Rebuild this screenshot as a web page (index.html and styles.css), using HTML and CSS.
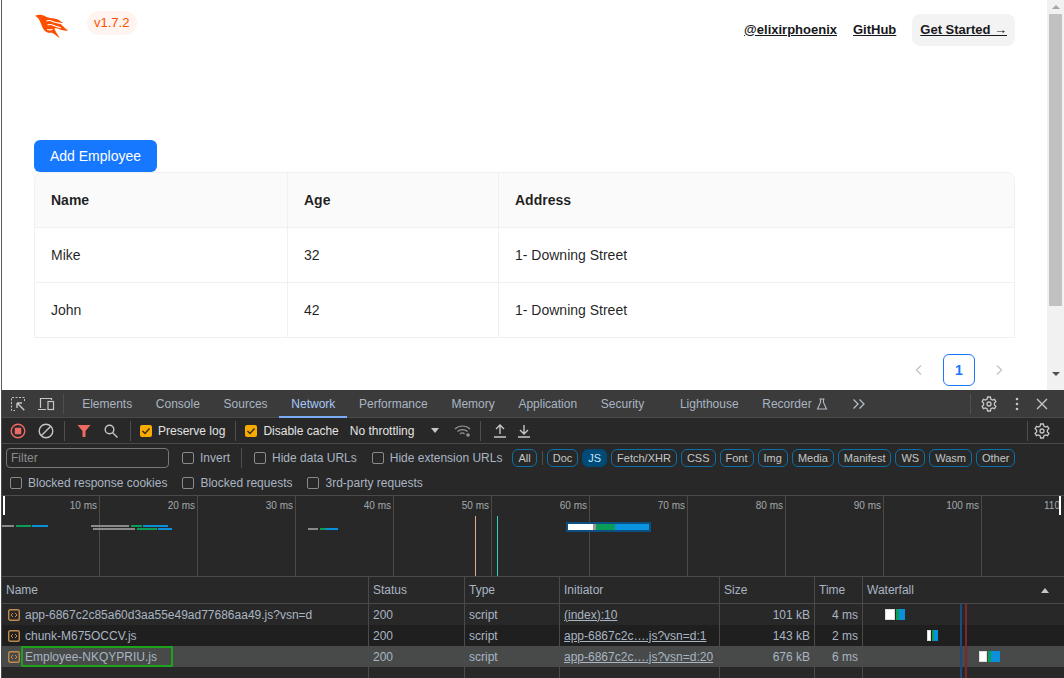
FILE: index.html
```html
<!DOCTYPE html>
<html lang="en">
<head>
<meta charset="utf-8">
<title>Employees</title>
<link rel="stylesheet" href="styles.css">
</head>
<body>
<div class="app">
  <section class="page">
    <main class="main">
      <header class="topbar">
        <div class="brand">
          <svg class="logo" viewBox="0 0 34 25" width="34" height="25">
            <path fill="#fd4f00" d="M0 1.800C1.700 1 3.500.5 5.500.7c3 .3 5 1.800 7 2.600 3.500 1.300 6 .6 9 1.800 2.500 1 4.500 2.500 6.500 4-1.500 0-3-.4-4-.2 3 1.600 5.500 5 9.300 7.800-4 .6-8-1.400-11-2.200-1-.3-2-.3-3 .2 1.500 3 3.200 6 5.500 9.200-3-1.500-5.500-4.300-8-5.200-3.500.6-6.500-.8-8.500-3.800C6.500 12 6 9 4.500 6.500 3.800 5 3 3.500 0 1.800Z"/>
            <path fill="none" stroke="#fff" stroke-width="1.100" d="M11.500 7c3-1.500 6 .5 8.500 1.300 2 .6 3.500.5 5 1M12.500 11c3-1.700 6 .6 9 1.600 1.500.5 3 .8 4.500 1.200M12 15.500c2 .5 4 .5 5.500-.3"/>
          </svg>
          <span class="version">v1.7.2</span>
        </div>
        <nav class="nav">
          <a class="nav-link" href="#">@elixirphoenix</a>
          <a class="nav-link" href="#">GitHub</a>
          <a class="nav-link nav-cta" href="#"><span>Get Started <span class="arrow">→</span></span></a>
        </nav>
      </header>
      <button class="add-btn" type="button">Add Employee</button>
      <div class="emp-table">
        <div class="emp-row emp-head"><div class="emp-cell">Name</div><div class="emp-cell">Age</div><div class="emp-cell">Address</div></div>
        <div class="emp-row"><div class="emp-cell">Mike</div><div class="emp-cell">32</div><div class="emp-cell">1- Downing Street</div></div>
        <div class="emp-row"><div class="emp-cell">John</div><div class="emp-cell">42</div><div class="emp-cell">1- Downing Street</div></div>
      </div>
      <div class="pager">
        <span class="pg-arrow"><svg viewBox="0 0 12 12" width="12" height="12"><path d="M8 1.500 3.500 6 8 10.500" fill="none" stroke="#c4c4c4" stroke-width="1.300"/></svg></span>
        <span class="pg-current">1</span>
        <span class="pg-arrow"><svg viewBox="0 0 12 12" width="12" height="12"><path d="M4 1.500 8.500 6 4 10.500" fill="none" stroke="#c4c4c4" stroke-width="1.300"/></svg></span>
      </div>
    </main>
    <aside class="pagebar">
      <div class="sb-up"></div>
      <div class="sb-thumb"></div>
      <div class="sb-down"></div>
    </aside>
  </section>

  <section class="devtools">
    <div class="tabs">
      <span class="tb-ico t-first"><svg viewBox="0 0 16 16" width="16" height="16" fill="none" stroke="#c4c7c5"><path d="M14.500 5V1.500H1.500V14.500H5" stroke-dasharray="2 1.500"/><path d="M7 7h5M7 7v5M7.300 7.300l7 7" stroke-width="1.400"/></svg></span>
      <span class="tb-ico t-device"><svg viewBox="0 0 18 16" width="18" height="16" fill="none" stroke="#c4c7c5" stroke-width="1.200"><path d="M3.500 12V2.500h11V4M1 13.500h8"/><rect x="11" y="5.500" width="5.500" height="8"/></svg></span>
      <span class="sep sep-tab"></span>
      <a class="tab">Elements</a><a class="tab">Console</a><a class="tab">Sources</a><a class="tab tab-on">Network</a><a class="tab">Performance</a><a class="tab">Memory</a><a class="tab">Application</a><a class="tab">Security</a><a class="tab tab-gap">Lighthouse</a><a class="tab">Recorder<svg class="flask" viewBox="0 0 12 12" width="12" height="12" fill="none" stroke="#b4bcc4" stroke-width="1.100"><path d="M3.500 1h5M4.500 1v3.500L1.500 11h9L7.500 4.500V1"/></svg></a>
      <span class="more"><svg viewBox="0 0 14 12" width="14" height="12" fill="none" stroke="#b4bcc4" stroke-width="1.300"><path d="M1.500 1.500 6 6l-4.500 4.500M7.500 1.500 12 6l-4.500 4.500"/></svg></span>
      <span class="tabs-right">
        <span class="sep"></span>
        <svg class="ic-gear" viewBox="0 0 16 16" width="16" height="16" fill="none" stroke="#c4c7c5" stroke-width="1.300"><path d="M6.600 1h2.800l.4 2 1.700 1 2-.7 1.400 2.400-1.500 1.400v1.800l1.500 1.400-1.400 2.400-2-.7-1.700 1-.4 2H6.600l-.4-2-1.700-1-2 .7L1.100 10.300l1.500-1.400V7.100L1.100 5.700l1.400-2.400 2 .7 1.700-1Z"/><circle cx="8" cy="8" r="2"/></svg>
        <svg class="ic-dots" viewBox="0 0 4 14" width="4" height="14" fill="#c4c7c5"><circle cx="2" cy="2" r="1.300"/><circle cx="2" cy="7" r="1.300"/><circle cx="2" cy="12" r="1.300"/></svg>
        <svg class="ic-close" viewBox="0 0 12 12" width="12" height="12" fill="none" stroke="#c4c7c5" stroke-width="1.400"><path d="M1 1l10 10M11 1 1 11"/></svg>
      </span>
    </div>

    <div class="toolbar">
      <svg class="ic-rec" viewBox="0 0 16 16" width="16" height="16"><circle cx="8" cy="8" r="6.800" fill="none" stroke="#ee6a62" stroke-width="1.400"/><rect x="4.800" y="4.800" width="6.400" height="6.400" rx=".8" fill="#ee6a62"/></svg>
      <svg class="ic-clear" viewBox="0 0 16 16" width="16" height="16" fill="none" stroke="#c4c7c5" stroke-width="1.400"><circle cx="8" cy="8" r="6.800"/><path d="M3.200 12.800 12.800 3.200"/></svg>
      <span class="sep sep-a"></span>
      <svg class="ic-filter" viewBox="0 0 14 14" width="14" height="14"><path d="M.5 1h13L8.500 7v6L5.500 13V7Z" fill="#ee6a62"/></svg>
      <svg class="ic-search" viewBox="0 0 14 14" width="14" height="14" fill="none" stroke="#c4c7c5" stroke-width="1.400"><circle cx="5.500" cy="5.500" r="4.300"/><path d="M8.700 8.700 13.500 13.500"/></svg>
      <span class="sep sep-b"></span>
      <label class="chk-label lit"><span class="chk chk-on"><svg viewBox="0 0 12 12" width="12" height="12"><path d="M2.500 6 5 8.500 9.500 3.500" fill="none" stroke="#3b3020" stroke-width="1.500"/></svg></span>Preserve log</label>
      <span class="sep sep-c"></span>
      <label class="chk-label lit"><span class="chk chk-on"><svg viewBox="0 0 12 12" width="12" height="12"><path d="M2.500 6 5 8.500 9.500 3.500" fill="none" stroke="#3b3020" stroke-width="1.500"/></svg></span>Disable cache</label>
      <span class="throttle">No throttling</span>
      <span class="caret"></span>
      <svg class="ic-wifi" viewBox="0 0 18 14" width="18" height="14" fill="none" stroke="#8f9499" stroke-width="1.200"><path d="M1 5c4-4 11-4 15 0M3.500 7.500c2.800-2.600 7.200-2.600 10 0M6 10c1.400-1.200 3.300-1.200 4.500 0"/><circle cx="14" cy="11" r="1.800" fill="#8f9499" stroke="none"/></svg>
      <span class="sep sep-d"></span>
      <svg class="ic-up" viewBox="0 0 14 14" width="14" height="14" fill="none" stroke="#c4c7c5" stroke-width="1.400"><path d="M7 10V1.500M3 5l4-4 4 4M1 13h12"/></svg>
      <svg class="ic-down" viewBox="0 0 14 14" width="14" height="14" fill="none" stroke="#c4c7c5" stroke-width="1.400"><path d="M7 1v8.500M3 6l4 4 4-4M1 13h12"/></svg>
      <span class="tool-right">
        <span class="sep"></span>
        <svg class="ic-gear2" viewBox="0 0 16 16" width="16" height="16" fill="none" stroke="#c4c7c5" stroke-width="1.300"><path d="M6.600 1h2.800l.4 2 1.700 1 2-.7 1.400 2.400-1.500 1.400v1.800l1.500 1.400-1.400 2.400-2-.7-1.700 1-.4 2H6.600l-.4-2-1.700-1-2 .7L1.100 10.300l1.500-1.400V7.100L1.100 5.700l1.400-2.400 2 .7 1.700-1Z"/><circle cx="8" cy="8" r="2"/></svg>
      </span>
    </div>

    <div class="filters">
      <div class="filter-input">Filter</div>
      <label class="chk-label f-invert"><span class="chk"></span>Invert</label>
      <span class="sep sep-f"></span>
      <label class="chk-label f-data"><span class="chk"></span>Hide data URLs</label>
      <label class="chk-label f-ext"><span class="chk"></span>Hide extension URLs</label>
      <span class="chip c-all">All</span>
      <span class="sep sep-g"></span>
      <span class="chip">Doc</span><span class="chip chip-on">JS</span><span class="chip">Fetch/XHR</span><span class="chip">CSS</span><span class="chip">Font</span><span class="chip">Img</span><span class="chip">Media</span><span class="chip">Manifest</span><span class="chip">WS</span><span class="chip">Wasm</span><span class="chip">Other</span>
    </div>

    <div class="filters2">
      <label class="chk-label"><span class="chk"></span>Blocked response cookies</label>
      <label class="chk-label"><span class="chk"></span>Blocked requests</label>
      <label class="chk-label"><span class="chk"></span>3rd-party requests</label>
    </div>

    <div class="overview">
      <div class="ov-cell">10 ms</div><div class="ov-cell">20 ms</div><div class="ov-cell">30 ms</div><div class="ov-cell">40 ms</div><div class="ov-cell">50 ms</div><div class="ov-cell">60 ms</div><div class="ov-cell">70 ms</div><div class="ov-cell">80 ms</div><div class="ov-cell">90 ms</div><div class="ov-cell">100 ms</div><div class="ov-cell ov-last">110</div>
      <i class="ov-handle h-l"></i><i class="ov-handle h-r"></i>
      <i class="mark m-load"></i><i class="mark m-dom"></i>
      <i class="b gray" style="left:0;width:12px;top:29px"></i><i class="b green" style="left:14px;width:15px;top:29px"></i><i class="b blue" style="left:30px;width:16px;top:29px"></i>
      <i class="b gray" style="left:89px;width:38px;top:29px"></i><i class="b green" style="left:129px;width:11px;top:29px"></i><i class="b blue" style="left:141px;width:25px;top:29px"></i>
      <i class="b gray" style="left:91px;width:42px;top:32px"></i><i class="b green" style="left:135px;width:20px;top:32px"></i><i class="b blue" style="left:156px;width:14px;top:32px"></i>
      <i class="b gray" style="left:306px;width:10px;top:32px"></i><i class="b green" style="left:318px;width:6px;top:32px"></i><i class="b blue" style="left:324px;width:12px;top:32px"></i>
      <div class="sel-bar"><i class="sb-w"></i><i class="sb-g"></i><i class="sb-gr"></i><i class="sb-b"></i></div>
    </div>

    <div class="net">
      <div class="net-row net-head"><div class="nc">Name</div><div class="nc">Status</div><div class="nc">Type</div><div class="nc">Initiator</div><div class="nc">Size</div><div class="nc">Time</div><div class="nc nc-wf">Waterfall<span class="sort"></span></div></div>
      <div class="net-row r-a">
        <div class="nc"><svg class="ficon" viewBox="0 0 12 12" width="12" height="12"><rect x=".7" y=".7" width="10.600" height="10.600" rx="1.500" fill="none" stroke="#c08a4e" stroke-width="1.400"/><path d="M5 4 3 6l2 2M7 4l2 2-2 2" fill="none" stroke="#c08a4e"/></svg>app-6867c2c85a60d3aa55e49ad77686aa49.js?vsn=d</div>
        <div class="nc">200</div><div class="nc">script</div><div class="nc"><u>(index):10</u></div><div class="nc num">101 kB</div><div class="nc num">4 ms</div>
        <div class="nc nc-wf"><i class="w white" style="left:22px;width:10px"></i><i class="w green" style="left:33px;width:3px"></i><i class="w blue" style="left:36px;width:6px"></i></div>
      </div>
      <div class="net-row r-b">
        <div class="nc"><svg class="ficon" viewBox="0 0 12 12" width="12" height="12"><rect x=".7" y=".7" width="10.600" height="10.600" rx="1.500" fill="none" stroke="#c08a4e" stroke-width="1.400"/><path d="M5 4 3 6l2 2M7 4l2 2-2 2" fill="none" stroke="#c08a4e"/></svg>chunk-M675OCCV.js</div>
        <div class="nc">200</div><div class="nc">script</div><div class="nc"><u>app-6867c2c….js?vsn=d:1</u></div><div class="nc num">143 kB</div><div class="nc num">2 ms</div>
        <div class="nc nc-wf"><i class="w white" style="left:64px;width:4px"></i><i class="w green" style="left:69px;width:2px"></i><i class="w blue" style="left:71px;width:4px"></i></div>
      </div>
      <div class="net-row r-c">
        <div class="nc nc-hl"><svg class="ficon" viewBox="0 0 12 12" width="12" height="12"><rect x=".7" y=".7" width="10.600" height="10.600" rx="1.500" fill="none" stroke="#c08a4e" stroke-width="1.400"/><path d="M5 4 3 6l2 2M7 4l2 2-2 2" fill="none" stroke="#c08a4e"/></svg>Employee-NKQYPRIU.js<i class="hl"></i></div>
        <div class="nc">200</div><div class="nc">script</div><div class="nc"><u>app-6867c2c….js?vsn=d:20</u></div><div class="nc num">676 kB</div><div class="nc num">6 ms</div>
        <div class="nc nc-wf"><i class="w white" style="left:116px;width:8px"></i><i class="w green" style="left:125px;width:3px"></i><i class="w blue" style="left:128px;width:9px"></i></div>
      </div>
      <div class="net-row r-a r-empty"><div class="nc"></div><div class="nc"></div><div class="nc"></div><div class="nc"></div><div class="nc"></div><div class="nc"></div><div class="nc nc-wf"></div></div>
      <i class="wf-line wf-dom"></i><i class="wf-line wf-load"></i>
    </div>
  </section>
</div>
</body>
</html>
```

FILE: styles.css
```css
* { box-sizing: border-box; }
html, body { margin: 0; height: 100%; overflow: hidden; background: #fff; }
.app { width: 1064px; height: 678px; display: flex; flex-direction: column; font-family: "Liberation Sans", Arial, sans-serif; }

/* page */
.page { height: 390px; display: flex; overflow: hidden; background: #fff; margin-left: 1px; border-left: 1px solid #5a5a5a; }
.main { width: 1045px; padding: 14px 32px 0; color: rgba(0,0,0,.88); font-size: 14px; }
.topbar { display: flex; justify-content: space-between; height: 32px; margin-bottom: 94px; }
.brand { display: flex; align-items: flex-start; margin-left: 1px; }
.logo { display: block; }
.version { margin: -3px 0 0 17.500px; height: 24px; line-height: 24px; padding: 0 7.500px; border-radius: 12px; background: #fff4ef; color: #fd4f00; font-size: 13px; font-weight: 500; }
.nav { display: flex; align-items: center; gap: 16px; }
.nav-link { color: #18181b; font-size: 13px; line-height: 15px; padding-bottom: 2px; font-weight: 700; text-decoration: underline; }
.nav-cta { height: 32px; padding: 0 8px 2px; display: flex; align-items: center; background: #f3f3f4; border-radius: 8px; }
.arrow { font-weight: 400; }
.add-btn { display: block; width: 123px; height: 32px; border: 0; border-radius: 6px; background: #1677ff; color: #fff; font: 14px "Liberation Sans", Arial, sans-serif; padding: 0; }
.emp-table { border: 1px solid #f0f0f0; border-radius: 8px 8px 0 0; height: 166px; }
.emp-row { display: grid; grid-template-columns: 253px 211px 1fr; height: 55px; border-bottom: 1px solid #f0f0f0; }
.emp-row:last-child { height: 54px; border-bottom: 0; }
.emp-cell { padding: 0 16px; display: flex; align-items: center; font-size: 14px; }
.emp-head { background: #fafafa; border-radius: 8px 8px 0 0; font-weight: 700; }
.emp-row .emp-cell:not(:last-child) { border-right: 1px solid #f0f0f0; }
.pager { display: flex; justify-content: flex-end; gap: 8px; margin-top: 16px; }
.pg-arrow { width: 32px; height: 32px; display: flex; align-items: center; justify-content: center; }
.pg-current { width: 32px; height: 32px; border: 1px solid #1677ff; border-radius: 6px; color: #1677ff; font-weight: 700; display: flex; align-items: center; justify-content: center; }
.pagebar { width: 17px; background: #f1f1f1; display: flex; flex-direction: column; align-items: center; }
.sb-up { width: 0; height: 0; margin-top: 5px; border: 4px solid transparent; border-top: 0; border-bottom: 4px solid #a3a3a3; }
.sb-thumb { width: 13px; height: 292px; margin-top: 5px; background: #c1c1c1; }
.sb-down { width: 0; height: 0; margin-top: 66px; border: 4px solid transparent; border-bottom: 0; border-top: 4px solid #505050; }

/* devtools */
.devtools { flex: 1; min-height: 0; background: #282828; color: #a9b5c2; font-size: 12px; margin-left: 1px; border-left: 1px solid #4a4a4a; }
.tabs { height: 28px; background: #3b3b3b; border-bottom: 1px solid #4a4a4a; display: flex; align-items: center; }
.tb-ico { display: flex; }
.t-first { margin-left: 8px; }
.t-device { margin-left: 11px; }
.sep { width: 1px; height: 20px; background: #4f4f4f; flex: none; }
.sep-tab { margin-left: 8px; }
.tab { height: 28px; padding: 1px 11.850px 0; color: #a9b5c2; display: flex; align-items: center; white-space: nowrap; }
.sep-tab + .tab { margin-left: 6.300px; }
.tab-on { color: #a8c7fa; box-shadow: inset 0 -2px 0 #7cacf8; }
.tab-gap { margin-left: 12px; }
.flask { margin-left: 4px; }
.more { margin-left: 13px; display: flex; }
.tabs-right { margin-left: auto; display: flex; align-items: center; }
.ic-gear { margin-left: 10px; }
.ic-dots { margin-left: 18px; }
.ic-close { margin: 0 16px 0 17px; }

.toolbar { height: 26px; border-bottom: 1px solid #4a4a4a; display: flex; align-items: center; }
.ic-rec { margin-left: 8px; }
.ic-clear { margin-left: 12px; }
.sep-a { margin-left: 10px; }
.ic-filter { margin-left: 12px; }
.ic-search { margin-left: 13px; }
.sep-b { margin-left: 12px; }
.chk-label { display: flex; align-items: center; white-space: nowrap; }
.lit { color: #e3e3e3; }
.toolbar .chk-label { margin-left: 9px; }
.chk { width: 12px; height: 12px; margin-right: 6px; border: 1px solid #8a8a8a; border-radius: 2px; display: block; flex: none; }
.chk-on { background: #f9ab00; border: 0; }
.sep-c { margin-left: 10px; }
.throttle { margin-left: 11px; color: #e3e3e3; }
.caret { margin-left: 17px; border: 4px solid transparent; border-bottom: 0; border-top: 5px solid #c4c7c5; width: 0; height: 0; }
.ic-wifi { margin-left: 15px; }
.sep-d { margin-left: 8px; }
.ic-up { margin-left: 12px; }
.ic-down { margin-left: 10px; }
.tool-right { margin-left: auto; display: flex; align-items: center; }
.ic-gear2 { margin: 0 14px 0 6px; }

.filters { height: 27px; display: flex; align-items: center; padding: 1px 0 0 4px; }
.filter-input { width: 163px; height: 20px; border: 1px solid #777; border-radius: 4px; padding: 0 4px; line-height: 18px; color: #8c8c8c; }
.f-invert { margin-left: 13px; }
.sep-f { margin-left: 11px; }
.f-data { margin-left: 12px; }
.f-ext { margin-left: 15px; }
.chip { height: 18px; line-height: 16px; padding: 0 5px; margin-left: 4px; border: 1px solid #0b6fa8; border-radius: 6px; font-size: 11px; color: #c4c7c5; white-space: nowrap; }
.c-all { margin-left: 10px; }
.sep-g { margin-left: 5px; height: 14px; }
.chip-on { background: #004a77; color: #c2e7ff; border-color: #004a77; }

.filters2 { height: 25px; display: flex; align-items: center; gap: 15px; padding-left: 8px; border-bottom: 1px solid #4a4a4a; }

.overview { position: relative; height: 81px; display: flex; border-bottom: 1px solid #4a4a4a; overflow: hidden; }
.ov-cell { width: 98px; flex: none; border-right: 1px solid #4a4a4a; text-align: right; padding: 4px 2px 0 0; font-size: 10px; color: #a4a8ac; }
.ov-last { width: 78px; border-right: 0; padding-right: 0; }
.ov-handle { position: absolute; top: 0; width: 2px; height: 19px; background: #fff; }
.h-l { left: 1px; }
.h-r { left: 1057px; }
.mark { position: absolute; top: 20px; bottom: 0; width: 1px; }
.m-load { left: 473px; background: #e8a98a; }
.m-dom { left: 495px; background: #2ad4c0; }
.b { position: absolute; height: 2px; }
.gray { background: #8a8a8a; }
.green { background: #0b9d58; }
.blue { background: #0a8fdb; }
.sel-bar { position: absolute; left: 564px; top: 26px; width: 85px; height: 10px; display: flex; padding: 2px; background: #0c4f80; }
.sel-bar i { display: block; height: 6px; }
.sb-w { width: 25px; background: #fff; }
.sb-g { width: 3px; background: #9a9a9a; }
.sb-gr { width: 19px; background: #0b9d58; }
.sb-b { flex: 1; background: #0a95e0; }

.net { position: relative; height: 101px; overflow: hidden; }
.net-row { display: grid; grid-template-columns: 367px 96px 95px 160px 95px 48px 1fr; height: 21px; }
.net-head { height: 27px; border-bottom: 1px solid #4a4a4a; }
.nc { position: relative; padding: 0 4px; border-right: 1px solid #4a4a4a; display: flex; align-items: center; white-space: nowrap; overflow: hidden; }
.nc u { text-decoration: underline; }
.nc-wf { border-right: 0; overflow: visible; }
.num { justify-content: flex-end; }
.net-head .nc-wf { justify-content: space-between; padding-right: 15px; }
.sort { width: 0; height: 0; border: 4px solid transparent; border-top: 0; border-bottom: 5px solid #c4c7c5; }
.ficon { margin: 0 5px 0 2px; flex: none; }
.r-a { background: #282828; }
.r-b { background: #1f1f1f; }
.r-c { background: #484a4a; }
.nc-hl { overflow: visible; }
.hl { position: absolute; left: 19px; top: 0; width: 152px; height: 21px; border: 2px solid #1ea21e; border-radius: 1px; }
.w { position: absolute; top: 5px; height: 11px; }
.white { background: #fff; border: 1px solid #ddd; }
.wf-line { position: absolute; top: 27px; bottom: 0; width: 2px; }
.wf-dom { left: 958px; background: #1f4a78; }
.wf-load { left: 963px; background: #7a2a26; }
```
